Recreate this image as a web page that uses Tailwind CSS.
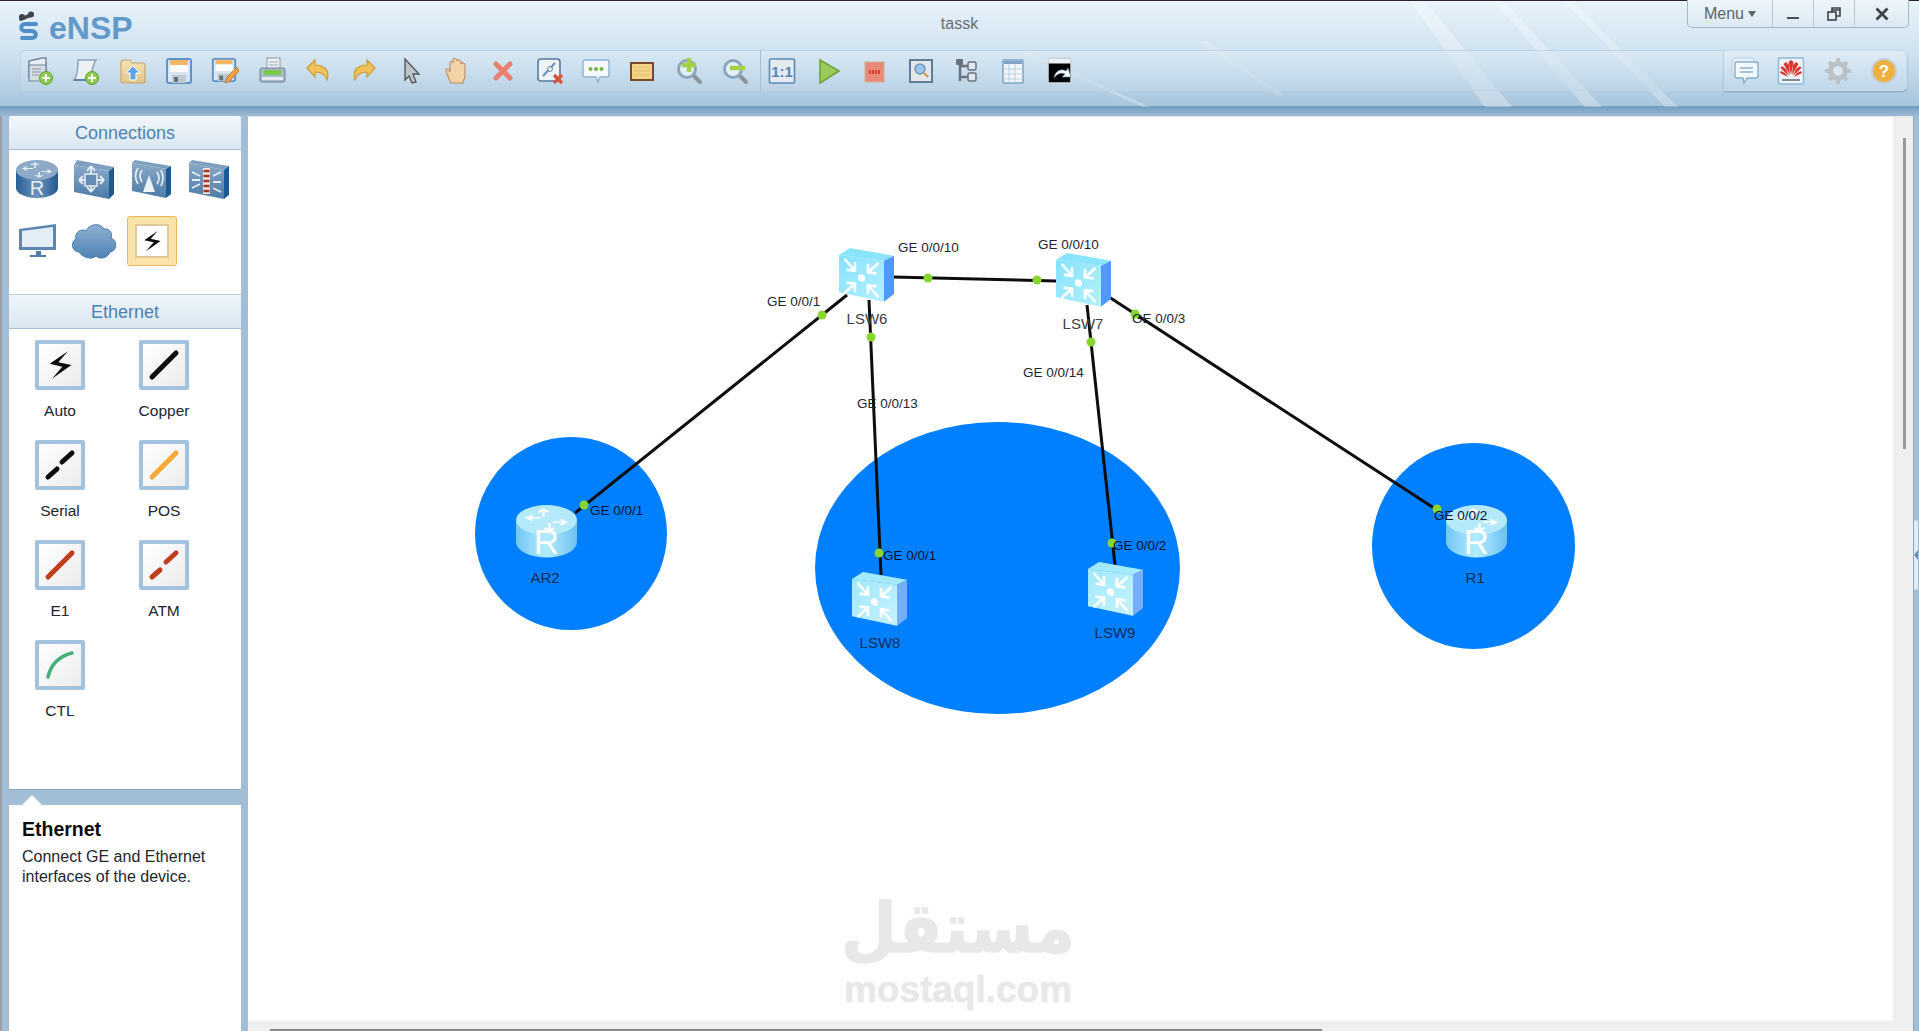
<!DOCTYPE html>
<html lang="en">

<head>
    <meta charset="UTF-8" />
    <title>eNSP - tassk</title>
    <script src="https://cdn.jsdelivr.net/npm/@tailwindcss/browser@4"></script>
</head>

<body class="font-['Liberation_Sans',Arial,sans-serif] overflow-hidden">
    <!-- shared shapes -->
    <svg width="0" height="0" class="absolute">
        <defs>
            <linearGradient id="swFront" x1="0" y1="0" x2="1" y2="1">
                <stop offset="0" stop-color="#86e2fd" />
                <stop offset="1" stop-color="#b5f0ff" />
            </linearGradient>
            <linearGradient id="rtBody" x1="0" y1="0" x2="1" y2="0">
                <stop offset="0" stop-color="#72c6f4" />
                <stop offset=".5" stop-color="#b4ecff" />
                <stop offset="1" stop-color="#6cc0f2" />
            </linearGradient>
            <linearGradient id="blueBody" x1="0" y1="0" x2="1" y2="0">
                <stop offset="0" stop-color="#275f95" />
                <stop offset=".5" stop-color="#6c94bb" />
                <stop offset="1" stop-color="#215a90" />
            </linearGradient>
            <linearGradient id="blueFront" x1="0" y1="0" x2="0" y2="1">
                <stop offset="0" stop-color="#8aa9c8" />
                <stop offset="1" stop-color="#4c7ba8" />
            </linearGradient>
            <linearGradient id="cloudFill" x1="0" y1="0" x2="0" y2="1">
                <stop offset="0" stop-color="#8db0d2" />
                <stop offset="1" stop-color="#4f83b4" />
            </linearGradient>
            <linearGradient id="tan" x1="0" y1="0" x2="0" y2="1">
                <stop offset="0" stop-color="#f4e2b4" />
                <stop offset="1" stop-color="#e2c688" />
            </linearGradient>
            <symbol id="inArrow" viewBox="0 0 14 14">
                <path d="M1 1 L11 11 M11.5 3 V11.5 H3" fill="none" stroke="#fff" stroke-width="2.6" />
            </symbol>
            <symbol id="sw" viewBox="0 0 55 54" overflow="visible">
                <path d="M0 7 L11 0 L55 7.7 L45 12.7Z" fill="#8ae4fc" />
                <path d="M45 12.7 L55 7.7 V46 L45 53.7Z" fill="#4f98fc" />
                <path d="M0 7 L45 12.7 V53.7 L0 44.3Z" fill="url(#swFront)" />
                <g transform="translate(22.5 30) skewY(7)">
                    <circle r="3.6" fill="#fff" />
                    <use href="#inArrow" x="-18" y="-18" width="14" height="14" />
                    <use href="#inArrow" x="-18" y="-18" width="14" height="14" transform="rotate(90)" />
                    <use href="#inArrow" x="-18" y="-18" width="14" height="14" transform="rotate(180)" />
                    <use href="#inArrow" x="-18" y="-18" width="14" height="14" transform="rotate(270)" />
                </g>
            </symbol>
            <symbol id="rt" viewBox="0 0 61 53">
                <path d="M0 16 V37 A30.5 15.5 0 0 0 61 37 V16Z" fill="url(#rtBody)" />
                <ellipse cx="30.5" cy="15" rx="30.5" ry="15" fill="#b3e9fb" />
                <g transform="translate(30.5 15) scale(1 .55)" stroke="#fff" stroke-width="2.6" fill="none">
                    <path d="M-20 -4 H-6 M-14 -9 L-20 -4 L-14 1" />
                    <path d="M20 4 H6 M14 9 L20 4 L14 -1" />
                    <path d="M-3 -20 V-6 M-8 -14 L-3 -20 L2 -14" />
                    <path d="M3 20 V6 M8 14 L3 20 L-2 14" />
                </g>
                <text x="30.5" y="49" text-anchor="middle" font-size="35" fill="#fff" font-family="Liberation Sans">R</text>
            </symbol>
            <symbol id="plusBadge" viewBox="0 0 14 14">
                <circle cx="7" cy="7" r="6.5" fill="#8ccb4e" stroke="#5f9f2c" />
                <path d="M7 3 V11 M3 7 H11" stroke="#fff" stroke-width="2" />
            </symbol>
            <symbol id="floppy" viewBox="0 0 28 28">
                <rect x="2" y="2" width="24" height="24" rx="2" fill="#d8e6f2" stroke="#5d93c8" stroke-width="2" />
                <rect x="5" y="3" width="18" height="5" fill="#f0b765" />
                <rect x="5" y="8" width="18" height="7" fill="#fff" />
                <rect x="7" y="18" width="14" height="8" fill="#bfc9d2" />
                <rect x="9" y="20" width="4" height="5" fill="#65727e" />
            </symbol>
            <symbol id="lens" viewBox="0 0 28 28">
                <path d="M17 17 L25 25" stroke="#8b949c" stroke-width="4" stroke-linecap="round" />
                <circle cx="12" cy="12" r="8.5" fill="#e4f0f9" stroke="#8aa6c0" stroke-width="3" />
            </symbol>
            <symbol id="bolt" viewBox="0 0 28 28">
                <path d="M21 2 L5 13 L16 15.500 L7 26 L24 14 L12.500 11.500Z" fill="#0c0c0c" />
            </symbol>
        </defs>
    </svg>

    <div class="flex flex-col w-[1919px] h-[1031px] bg-[#a2bdd6] overflow-hidden">
        <!-- Title bar and toolbar -->
        <header class="relative h-[106px] shrink-0 bg-gradient-to-b from-[#e8f3fa] via-[#cfe2f0] to-[#a8c5dc] border-t border-[#2c2430]">
            <svg class="absolute inset-0 pointer-events-none" width="1919" height="106" fill="#fff">
                <path d="M1410 0 L1425 0 L1512 106 L1485 106Z" opacity=".3" />
                <path d="M1494 0 L1504 0 L1602 106 L1585 106Z" opacity=".28" />
                <path d="M1564 0 L1572 0 L1678 106 L1665 106Z" opacity=".25" />
                <path d="M1020 50 L1025 50 L1150 106 L1142 106Z" opacity=".25" />
                <path d="M1200 40 L1206 40 L1285 95 L1278 95Z" opacity=".2" />
            </svg>

            <div class="relative grid grid-cols-[1fr_auto_1fr] h-[49px]">
                <div class="flex items-start pl-[18px] pt-[10px] gap-[6px]">
                    <svg width="25" height="30" viewBox="0 0 25 30">
                        <path d="M3 8 L13 4" stroke="#4a4f57" stroke-width="4" stroke-linecap="round" />
                        <circle cx="4" cy="6" r="3" fill="#3f444c" />
                        <circle cx="13" cy="3.5" r="3" fill="#3f444c" />
                        <path d="M18 13 H7 C2 13 2 20 7 20 H14 C19 20 19 27 14 27 H4" fill="none" stroke="#4f8ec7" stroke-width="4" stroke-linecap="round" />
                    </svg>
                    <span class="text-[32px] leading-[40px] font-bold text-[#6199ca] -mt-[3px]">eNSP</span>
                </div>
                <div class="pt-[8px] text-[16px] leading-[30px] text-[#6a6e72]">tassk</div>
                <div class="flex justify-end pr-[10px]">
                    <div class="flex h-[28px] -mt-px rounded-b-[5px] border border-t-0 border-[#a4b8c8] bg-gradient-to-b from-[#eef6fb] to-[#dbe9f3] text-[#5f6468]">
                        <div class="flex items-center justify-center gap-[4px] w-[84px] pt-[1px] text-[16px]">
                            Menu
                            <span class="w-0 h-0 border-x-[4px] border-x-transparent border-t-[6px] border-t-[#5f6468]"></span>
                        </div>
                        <div class="flex items-center justify-center w-[41px] border-l border-[#b6c8d6]">
                            <div class="w-[12px] h-[2px] mt-[9px] bg-[#4a4f54]"></div>
                        </div>
                        <div class="flex items-center justify-center w-[41px] border-l border-[#b6c8d6]">
                            <svg width="14" height="14" viewBox="0 0 14 14" fill="none" stroke="#3f4448" stroke-width="1.6">
                                <rect x="1" y="5" width="8" height="8" />
                                <path d="M5 5 V1 H13 V9 H9 M5 3 H13" />
                            </svg>
                        </div>
                        <div class="flex items-center justify-center w-[54px] border-l border-[#b6c8d6]">
                            <svg width="14" height="14" viewBox="0 0 14 14" stroke="#3f4448" stroke-width="2.8">
                                <path d="M1.5 1.5 L12.5 12.5 M12.5 1.5 L1.5 12.5" />
                            </svg>
                        </div>
                    </div>
                </div>
            </div>

            <div class="relative flex h-[41px] pl-[20px] pr-[12px]">
                <div class="flex flex-1 items-center gap-[18.35px] pl-[5px] rounded-l-[5px] border-y border-l border-y-[#bed3e3] border-l-[#bed3e3] bg-gradient-to-b from-[#dbeaf5]/70 to-[#c1d8e9]/50">
                    <!-- new topology -->
                    <svg class="w-[28px] h-[28px] shrink-0" viewBox="0 0 28 28">
                        <path d="M3 4 L16 1 H20 V20 H3Z" fill="#e8edf2" stroke="#6f88a3" stroke-width="1.5" />
                        <path d="M3 8 H20 V24 H3Z" fill="#d5dce3" stroke="#6f88a3" stroke-width="1.2" />
                        <path d="M6 12 H15 M6 15 H15 M6 18 H13" stroke="#8f9aa6" />
                        <use href="#plusBadge" x="13" y="14" width="14" height="14" />
                    </svg>
                    <svg class="w-[28px] h-[28px] shrink-0" viewBox="0 0 28 28">
                        <path d="M6 3 H24 C21 6 20 14 18 23 H2 C5 20 6 12 6 3Z" fill="#eef1f4" stroke="#8ba2ba" stroke-width="1.5" />
                        <path d="M2 23 H17" stroke="#5b86b1" stroke-width="2" />
                        <use href="#plusBadge" x="13" y="14" width="14" height="14" />
                    </svg>
                    <svg class="w-[28px] h-[28px] shrink-0" viewBox="0 0 28 28">
                        <path d="M2 6 Q2 3 5 3 H11 L13 6 H24 Q26 6 26 8 V24 Q26 26 24 26 H4 Q2 26 2 24Z" fill="url(#tan)" stroke="#c6a86e" stroke-width="1.2" />
                        <path d="M14 9 L21 16 H17 V23 H11 V16 H7Z" fill="#5da4e4" stroke="#fff" />
                    </svg>
                    <svg class="w-[28px] h-[28px] shrink-0" viewBox="0 0 28 28">
                        <use href="#floppy" width="28" height="28" />
                    </svg>
                    <svg class="w-[28px] h-[28px] shrink-0" viewBox="0 0 28 28">
                        <use href="#floppy" width="26" height="26" />
                        <path d="M14 26 L16 20 L26 10 L28 14 L18 25Z" fill="#eea53f" stroke="#a8652a" stroke-width=".7" />
                    </svg>
                    <svg class="w-[28px] h-[28px] shrink-0" viewBox="0 0 28 28">
                        <rect x="9" y="1" width="13" height="13" fill="#f0f2f4" stroke="#8f9aa5" />
                        <path d="M11 5 H20 M11 8 H20" stroke="#9aa5b0" />
                        <rect x="2" y="11" width="25" height="14" rx="2" fill="#a8b9c9" stroke="#6d8296" />
                        <rect x="6" y="13" width="17" height="5" fill="#79c84a" />
                        <rect x="4" y="20" width="21" height="3" fill="#e4e9ee" />
                    </svg>
                    <svg class="w-[28px] h-[28px] shrink-0" viewBox="0 0 28 28">
                        <path d="M3 11 L11 3 V8 C20 8 26 13 23 23 C21 17 17 15 11 15 V20Z" fill="#f0c35a" stroke="#cf9a35" stroke-width="1.2" />
                    </svg>
                    <svg class="w-[28px] h-[28px] shrink-0" viewBox="0 0 28 28">
                        <path d="M25 11 L17 3 V8 C8 8 2 13 5 23 C7 17 11 15 17 15 V20Z" fill="#f0c35a" stroke="#cf9a35" stroke-width="1.2" />
                    </svg>
                    <svg class="w-[28px] h-[28px] shrink-0" viewBox="0 0 28 28">
                        <path d="M8 2 L22 17 H16 L19 25 L15 26 L12 19 L8 23Z" fill="#bfc4c9" stroke="#55595e" stroke-width="1.4" />
                    </svg>
                    <svg class="w-[28px] h-[28px] shrink-0" viewBox="0 0 28 28">
                        <path d="M8 26 C6 21 3 17 3 13 C4 11 6 12 7 15 V6 C7 4 10 4 10 6 V3 C10 1 13 1 14 3 V4 C15 2 18 3 18 5 V7 C19 5 22 6 22 8 V18 C22 22 20 24 20 26Z" fill="#f3d3a8" stroke="#b98f5e" stroke-width="1.1" />
                    </svg>
                    <svg class="w-[28px] h-[28px] shrink-0" viewBox="0 0 28 28">
                        <path d="M7 7 L21 21 M21 7 L7 21" stroke="#e8806f" stroke-width="5" stroke-linecap="round" />
                    </svg>
                    <svg class="w-[28px] h-[28px] shrink-0" viewBox="0 0 28 28">
                        <rect x="2" y="2" width="22" height="22" rx="3" fill="#eef3f8" stroke="#55799e" stroke-width="1.6" />
                        <path d="M7 19 L19 6" stroke="#6c8fb3" stroke-width="2" />
                        <circle cx="14" cy="12" r="2.4" fill="#fff" stroke="#55799e" />
                        <path d="M18 18 L26 26 M26 18 L18 26" stroke="#d9533f" stroke-width="3.2" />
                    </svg>
                    <svg class="w-[28px] h-[28px] shrink-0" viewBox="0 0 28 28">
                        <path d="M3 3 H25 Q27 3 27 5 V18 Q27 20 25 20 H18 L16 25 L14 20 H3 Q1 20 1 18 V5 Q1 3 3 3Z" fill="#f2f8fd" stroke="#8cb3d3" stroke-width="1.4" />
                        <circle cx="8.5" cy="12" r="2" fill="#77b53c" />
                        <circle cx="14" cy="12" r="2" fill="#77b53c" />
                        <circle cx="19.500" cy="12" r="2" fill="#77b53c" />
                    </svg>
                    <svg class="w-[28px] h-[28px] shrink-0" viewBox="0 0 28 28">
                        <rect x="3" y="6" width="22" height="17" fill="#f2d488" stroke="#7a4a28" stroke-width="2" />
                        <path d="M6 10 H22 M6 14 H22 M6 18 H22" stroke="#e6bc68" stroke-width="1.2" />
                    </svg>
                    <svg class="w-[28px] h-[28px] shrink-0" viewBox="0 0 28 28">
                        <use href="#lens" width="28" height="28" />
                        <path d="M14 1 V15 M7 8 H21" stroke="#a4d246" stroke-width="4.5" />
                    </svg>
                    <svg class="w-[28px] h-[28px] shrink-0" viewBox="0 0 28 28">
                        <use href="#lens" width="28" height="28" />
                        <path d="M9 11 H24" stroke="#a4d246" stroke-width="4.5" />
                    </svg>
                    <div class="relative w-[28px] h-[28px] shrink-0">
                        <div class="absolute -left-[8px] -top-[7px] w-px h-[41px] bg-[#a9bfd0]"></div>
                        <svg class="w-[28px] h-[28px]" viewBox="0 0 28 28">
                            <rect x="1.500" y="2" width="25" height="24" rx="1.500" fill="#e4eaf0" stroke="#5b8ab7" stroke-width="1.6" />
                            <text x="14" y="20" text-anchor="middle" font-size="15" font-weight="700" fill="#4f86bc" font-family="Liberation Sans">1:1</text>
                        </svg>
                    </div>
                    <svg class="w-[28px] h-[28px] shrink-0" viewBox="0 0 28 28">
                        <path d="M6 3 L25 14 L6 26Z" fill="#9acb5c" stroke="#6ea338" stroke-width="1.6" />
                    </svg>
                    <svg class="w-[28px] h-[28px] shrink-0" viewBox="0 0 28 28">
                        <rect x="5" y="5" width="19" height="20" fill="#e98a78" stroke="#d5ad9a" />
                        <path d="M9 15 H20" stroke="#d9402f" stroke-width="4" stroke-dasharray="2 1" />
                    </svg>
                    <svg class="w-[28px] h-[28px] shrink-0" viewBox="0 0 28 28">
                        <rect x="3" y="3" width="22" height="22" fill="#e4e7ea" stroke="#5f7c98" stroke-width="2" />
                        <circle cx="13" cy="12" r="5" fill="#9cc6ec" stroke="#6f95b8" stroke-width="1.4" />
                        <path d="M17 16 L21 20" stroke="#c89a3c" stroke-width="2" />
                    </svg>
                    <svg class="w-[28px] h-[28px] shrink-0" viewBox="0 0 28 28">
                        <path d="M7 4 V24 M7 9 H15 M7 20 H15" stroke="#69727b" stroke-width="2.5" fill="none" />
                        <rect x="3" y="2" width="7" height="6" rx="1" fill="#69727b" />
                        <rect x="15" y="5" width="8" height="8" rx="1.500" fill="#dfe8f0" stroke="#69727b" stroke-width="1.5" />
                        <rect x="15" y="16" width="8" height="8" rx="1.500" fill="#dfe8f0" stroke="#69727b" stroke-width="1.5" />
                    </svg>
                    <svg class="w-[28px] h-[28px] shrink-0" viewBox="0 0 28 28">
                        <rect x="4" y="3" width="20" height="23" rx="1" fill="#f4f7fa" stroke="#7ea3c6" stroke-width="1.5" />
                        <rect x="5" y="4" width="18" height="3" fill="#7ea3c6" />
                        <path d="M4 12 H24 M4 17 H24 M4 22 H24 M10 7 V26 M16 7 V26" stroke="#b9cfe2" />
                    </svg>
                    <svg class="w-[28px] h-[28px] shrink-0" viewBox="0 0 28 28">
                        <rect x="2" y="1" width="23" height="25" rx="1" fill="#050505" stroke="#cfdbe6" stroke-width="1.5" />
                        <rect x="2.500" y="1.500" width="22" height="5" fill="#eef2f5" />
                        <path d="M8 21 C9 14 15 11 20 14 L22 11 L25 20 L16 20 L19 17 C15 15 11 17 8 21Z" fill="#fff" stroke="#3f78ad" stroke-width=".6" />
                    </svg>
                </div>
                <div class="flex items-center gap-[18.4px] w-[183px] pl-[7px] rounded-r-[6px] border-y border-r border-[#c9dcea] bg-gradient-to-b from-[#dfedf7] to-[#bfd7e9] shadow-[0_1px_2px_#7f9fb8]">
                    <svg class="w-[28px] h-[28px] shrink-0" viewBox="0 0 28 28">
                        <rect x="1" y="1" width="22" height="18" rx="2" fill="#e2edf6" stroke="#b9d0e3" />
                        <path d="M6 5 H25 Q27 5 27 7 V19 Q27 21 25 21 H16 L13 26 L12 21 H6 Q4 21 4 19 V7 Q4 5 6 5Z" fill="#f2f8fd" stroke="#89aecd" stroke-width="1.4" />
                        <path d="M9 11 H22 M9 15 H22" stroke="#8fb1cd" stroke-width="1.4" />
                    </svg>
                    <svg class="w-[28px] h-[28px] shrink-0" viewBox="0 0 28 28">
                        <rect x="1.500" y="1" width="25" height="26" rx="1" fill="#eef3f7" stroke="#8fb7d8" stroke-width="1.4" />
                        <g fill="#d8382c">
                            <path d="M14 18 L11.500 5 L14 3 L16.500 5Z" />
                            <path d="M13 18 L6.500 7 L9 5 L12 8Z" />
                            <path d="M15 18 L21.500 7 L19 5 L16 8Z" />
                            <path d="M12 19 L3.500 11 L5 9 L9 12Z" />
                            <path d="M16 19 L24.500 11 L23 9 L19 12Z" />
                            <path d="M11 20 L3 16 L4 14 L8 16Z" />
                            <path d="M17 20 L25 16 L24 14 L20 16Z" />
                        </g>
                        <path d="M5 23 H23" stroke="#66717c" stroke-width="1.600" />
                    </svg>
                    <svg class="w-[28px] h-[28px] shrink-0" viewBox="0 0 28 28">
                        <circle cx="14" cy="14" r="7.5" fill="none" stroke="#bcc1c6" stroke-width="5" />
                        <path d="M14 1 V6 M14 22 V27 M1 14 H6 M22 14 H27 M5 5 L8.500 8.500 M19.500 19.500 L23 23 M23 5 L19.500 8.500 M8.500 19.500 L5 23" stroke="#bcc1c6" stroke-width="4" />
                        <circle cx="14" cy="14" r="4" fill="#dbe7f1" />
                    </svg>
                    <svg class="w-[28px] h-[28px] shrink-0" viewBox="0 0 28 28">
                        <circle cx="14" cy="14" r="12" fill="#eeb040" stroke="#c5cfd8" stroke-width="2" />
                        <text x="14" y="20" text-anchor="middle" font-size="17" font-weight="700" fill="#fff" font-family="Liberation Sans">?</text>
                    </svg>
                </div>
            </div>
        </header>

        <div class="h-[10px] shrink-0 bg-gradient-to-b from-[#6f9cbf] to-[#9fbbd3]"></div>

        <div class="flex flex-1 min-h-0">
            <!-- Left column -->
            <aside class="flex flex-col w-[248px] shrink-0 pl-[7px] pr-[7px] border-l-2 border-[#9b9fa3]">
                <div class="flex flex-col h-[674px] bg-white rounded-t-[3px] border-b border-[#8ea6ba]">
                    <div class="flex items-center justify-center h-[34px] pt-[2px] rounded-t-[3px] bg-gradient-to-b from-[#f2f7fb] to-[#dae7f1] border-b border-[#a6c0d6] text-[18px] text-[#4d81b5]">Connections</div>
                    <div class="h-[144px] -ml-[1px] pt-[4px] grid grid-cols-[repeat(4,57.5px)] auto-rows-[50px] gap-y-[12px]">
                        <div class="flex items-center justify-center">
                            <svg class="overflow-visible" width="44" height="39" viewBox="0 0 44 39">
                                <path d="M1 10 V28 A21 10 0 0 0 43 28 V10Z" fill="url(#blueBody)" />
                                <ellipse cx="22" cy="10" rx="21" ry="10" fill="#8ea9c6" />
                                <g transform="translate(22 10) scale(1 .5)" stroke="#e6eef5" stroke-width="1.800" fill="none">
                                    <path d="M-14 -3 H-4 M-10 -7 L-14 -3 L-10 1 M14 3 H4 M10 7 L14 3 L10 -1 M-2 -14 V-4 M-6 -10 L-2 -14 L2 -10 M2 14 V4 M6 10 L2 14 L-2 10" />
                                </g>
                                <text x="22" y="35" text-anchor="middle" font-size="20" fill="#e8eff5" font-family="Liberation Sans">R</text>
                            </svg>
                        </div>
                        <div class="flex items-center justify-center">
                            <svg width="40" height="39" viewBox="0 0 40 39">
                                <path d="M0 5 L3 0 L40 7 L35 11Z" fill="#7f9fc0" />
                                <path d="M35 11 L40 7 V34 L35 39Z" fill="#1c5a92" />
                                <path d="M0 5 L35 11 V39 L0 32Z" fill="url(#blueFront)" />
                                <path d="M17 6 V32 M5 20 H30 M17 6 L13 11 M17 6 L21 11 M17 32 L13 27 M17 32 L21 27 M5 20 L9 16 M5 20 L9 24 M30 20 L26 16 M30 20 L26 24" stroke="#e6eef5" stroke-width="1.800" fill="none" />
                                <rect x="11" y="14" width="12" height="12" fill="#658db3" stroke="#e6eef5" stroke-width="1.500" />
                            </svg>
                        </div>
                        <div class="flex items-center justify-center">
                            <svg width="39" height="38" viewBox="0 0 39 38">
                                <path d="M0 3 L3 0 L39 6 L34 9Z" fill="#7f9fc0" />
                                <path d="M34 9 L39 6 V34 L34 38Z" fill="#1c5a92" />
                                <path d="M0 3 L34 9 V38 L0 31Z" fill="url(#blueFront)" />
                                <path d="M17 15 L11 32 H23Z" fill="#eef3f8" />
                                <path d="M10 10 Q6 16 10 22 M25 12 Q29 18 25 24 M6 8 Q1 16 6 24 M29 10 Q33 18 29 26" stroke="#e6eef5" stroke-width="1.700" fill="none" />
                            </svg>
                        </div>
                        <div class="flex items-center justify-center">
                            <svg width="40" height="39" viewBox="0 0 40 39">
                                <path d="M0 3 L3 0 L40 6 L35 10Z" fill="#7f9fc0" />
                                <path d="M35 10 L40 6 V35 L35 39Z" fill="#1c5a92" />
                                <path d="M0 3 L35 10 V39 L0 32Z" fill="url(#blueFront)" />
                                <rect x="14" y="8" width="7" height="26" fill="#efe6df" />
                                <path d="M14.500 11 H20.500 M14.500 16 H20.500 M14.500 21 H20.500 M14.500 26 H20.500 M14.500 31 H20.500" stroke="#a8382a" stroke-width="2.400" />
                                <path d="M3 12 L11 16 M3 20 H11 M3 28 L11 24 M24 16 L32 12 M24 22 H32 M24 28 L32 32" stroke="#e6eef5" stroke-width="1.800" />
                            </svg>
                        </div>
                        <div class="flex items-center justify-center pl-[2px]">
                            <svg width="37" height="34" viewBox="0 0 37 34">
                                <path d="M0 5 L37 0 V26 L0 26Z" fill="#5c87b3" />
                                <path d="M3 7 L34 3 V23 H3Z" fill="#e4eef7" />
                                <path d="M17 27 H22 V31 H27 V33 H11 V31 H17Z" fill="#4f7ca9" />
                            </svg>
                        </div>
                        <div class="flex items-center justify-center">
                            <svg width="46" height="38" viewBox="0 0 46 38">
                                <path d="M8 30 C1 30 -1 20 5 17 C3 10 11 6 15 9 C18 2 29 0 33 7 C39 6 42 12 40 16 C47 19 46 29 39 30 C37 36 29 38 25 34 C21 38 12 36 8 30Z" fill="url(#cloudFill)" stroke="#4a7eae" />
                            </svg>
                        </div>
                        <div class="flex items-center justify-center">
                            <div class="flex items-center justify-center w-[50px] h-[50px] rounded-[3px] border border-[#e8b95a] bg-[#fae3a8]">
                                <div class="flex items-center justify-center w-[34px] h-[34px] border-[2px] border-[#dfc998] bg-white">
                                    <svg width="24" height="24"><use href="#bolt" width="24" height="24" /></svg>
                                </div>
                            </div>
                        </div>
                    </div>
                    <div class="flex items-center justify-center h-[35px] pt-[2px] bg-gradient-to-b from-[#eef5fa] to-[#dae7f1] border-y border-t-[#c2ccd4] border-b-[#a6c0d6] text-[18px] text-[#4d81b5]">Ethernet</div>
                    <div class="-ml-[1px] grid grid-cols-[104px_104px] auto-rows-[100px] pt-[11px] text-[15.5px] leading-[20px] text-[#20242c]">
                        <div class="flex flex-col items-center gap-[11px]">
                            <div class="flex items-center justify-center w-[50px] h-[50px] rounded-[2px] border-[4px] border-[#a3c2de] bg-gradient-to-br from-white to-[#ececec]">
                                <svg width="32" height="32"><use href="#bolt" width="32" height="32" /></svg>
                            </div>
                            Auto
                        </div>
                        <div class="flex flex-col items-center gap-[11px]">
                            <div class="flex items-center justify-center w-[50px] h-[50px] rounded-[2px] border-[4px] border-[#a3c2de] bg-gradient-to-br from-white to-[#ececec]">
                                <svg width="36" height="36" viewBox="0 0 36 36"><path d="M6 30 L30 6" stroke="#0c0c0c" stroke-width="5" stroke-linecap="round" /></svg>
                            </div>
                            Copper
                        </div>
                        <div class="flex flex-col items-center gap-[11px]">
                            <div class="flex items-center justify-center w-[50px] h-[50px] rounded-[2px] border-[4px] border-[#a3c2de] bg-gradient-to-br from-white to-[#ececec]">
                                <svg width="36" height="36" viewBox="0 0 36 36"><path d="M6 30 L15 22 M20 15 L30 6" stroke="#0c0c0c" stroke-width="5" stroke-linecap="round" /></svg>
                            </div>
                            Serial
                        </div>
                        <div class="flex flex-col items-center gap-[11px]">
                            <div class="flex items-center justify-center w-[50px] h-[50px] rounded-[2px] border-[4px] border-[#a3c2de] bg-gradient-to-br from-white to-[#ececec]">
                                <svg width="36" height="36" viewBox="0 0 36 36"><path d="M6 30 L30 6" stroke="#f2a93a" stroke-width="5" stroke-linecap="round" /></svg>
                            </div>
                            POS
                        </div>
                        <div class="flex flex-col items-center gap-[11px]">
                            <div class="flex items-center justify-center w-[50px] h-[50px] rounded-[2px] border-[4px] border-[#a3c2de] bg-gradient-to-br from-white to-[#ececec]">
                                <svg width="36" height="36" viewBox="0 0 36 36"><path d="M6 30 L30 6" stroke="#bd3f1d" stroke-width="5" stroke-linecap="round" /></svg>
                            </div>
                            E1
                        </div>
                        <div class="flex flex-col items-center gap-[11px]">
                            <div class="flex items-center justify-center w-[50px] h-[50px] rounded-[2px] border-[4px] border-[#a3c2de] bg-gradient-to-br from-white to-[#ececec]">
                                <svg width="36" height="36" viewBox="0 0 36 36"><path d="M6 30 L14 23 M20 15 L30 6" stroke="#bd3f1d" stroke-width="5" stroke-linecap="round" /></svg>
                            </div>
                            ATM
                        </div>
                        <div class="flex flex-col items-center gap-[11px]">
                            <div class="flex items-center justify-center w-[50px] h-[50px] rounded-[2px] border-[4px] border-[#a3c2de] bg-gradient-to-br from-white to-[#ececec]">
                                <svg width="36" height="36" viewBox="0 0 36 36"><path d="M6 30 C9 17 18 9 30 6" fill="none" stroke="#45b07a" stroke-width="3.500" stroke-linecap="round" /></svg>
                            </div>
                            CTL
                        </div>
                    </div>
                </div>

                <div class="relative flex-1 mt-[15px] bg-white px-[13px] pt-[11px] text-[#22262e]">
                    <div class="absolute left-[13px] -top-[10px] w-0 h-0 border-x-[10px] border-x-transparent border-b-[10px] border-b-white"></div>
                    <h2 class="text-[19.5px] leading-[26px] font-bold text-[#0c0c0c]">Ethernet</h2>
                    <p class="mt-[5px] text-[16px] leading-[20px]">Connect GE and Ethernet<br />interfaces of the device.</p>
                </div>
            </aside>

            <!-- Topology canvas -->
            <main class="flex flex-col flex-1 min-w-0">
                <div class="flex flex-1 min-h-0 border-t border-[#dfe5ea]">
                    <svg class="flex-1 bg-white" width="1645" height="904" viewBox="248 117 1645 904" font-family="Liberation Sans">
                        <ellipse cx="571" cy="533.500" rx="96" ry="96.500" fill="#0080ff" />
                        <ellipse cx="997.500" cy="568" rx="182.500" ry="146" fill="#0080ff" />
                        <ellipse cx="1473.500" cy="546" rx="101.500" ry="103" fill="#0080ff" />

                        <g stroke="#0d0d0d" stroke-width="3" fill="none">
                            <path d="M847 295 L575 513" />
                            <path d="M893 277 L1056 281" />
                            <path d="M869 300 L881 575" />
                            <path d="M1087 305 L1115 565" />
                            <path d="M1109 297 L1437 510" />
                        </g>

                        <g fill="#87d52f">
                            <circle cx="822" cy="315" r="4.500" />
                            <circle cx="928" cy="278" r="4.500" />
                            <circle cx="1037" cy="280" r="4.500" />
                            <circle cx="871" cy="337" r="4.500" />
                            <circle cx="1091" cy="342" r="4.500" />
                            <circle cx="1135" cy="314" r="4.500" />
                            <circle cx="584" cy="505" r="4.500" />
                            <circle cx="879" cy="553" r="4.500" />
                            <circle cx="1112" cy="543" r="4.500" />
                            <circle cx="1437" cy="509" r="4.500" />
                        </g>

                        <use href="#sw" x="839" y="248" width="55" height="54" />
                        <use href="#sw" x="1056" y="253" width="55" height="54" />
                        <use href="#sw" x="852" y="572" width="55" height="54" />
                        <path d="M852 579 L863 572 L907 580 V618 L897 626 L852 616Z" fill="#fff" opacity=".22" />
                        <use href="#sw" x="1088" y="562" width="55" height="54" />
                        <path d="M1088 569 L1099 562 L1143 570 V608 L1133 616 L1088 606Z" fill="#fff" opacity=".22" />
                        <use href="#rt" x="516" y="505" width="61" height="53" />
                        <use href="#rt" x="1446" y="505" width="61" height="53" />

                        <g font-size="13.500" fill="#1d2430">
                            <text x="767" y="306">GE 0/0/1</text>
                            <text x="898" y="252">GE 0/0/10</text>
                            <text x="1038" y="249">GE 0/0/10</text>
                            <text x="857" y="408">GE 0/0/13</text>
                            <text x="1023" y="377">GE 0/0/14</text>
                            <text x="1132" y="323">GE 0/0/3</text>
                        </g>
                        <g font-size="13.500" fill="#08122c">
                            <text x="590" y="515">GE 0/0/1</text>
                            <text x="883" y="560">GE 0/0/1</text>
                            <text x="1113" y="550">GE 0/0/2</text>
                            <text x="1434" y="520">GE 0/0/2</text>
                        </g>
                        <g font-size="15" text-anchor="middle" fill="#3c4048">
                            <text x="867" y="324">LSW6</text>
                            <text x="1083" y="329">LSW7</text>
                        </g>
                        <g font-size="15" text-anchor="middle" fill="#0c2f5c">
                            <text x="880" y="648">LSW8</text>
                            <text x="1115" y="638">LSW9</text>
                            <text x="545" y="583">AR2</text>
                            <text x="1475" y="583">R1</text>
                        </g>

                        <!-- watermark -->
                        <g text-anchor="middle" fill="#e8e8e8">
                            <text transform="translate(958 952) scale(.925 1)" font-size="69" font-weight="700" font-family="DejaVu Sans" direction="rtl" stroke="#e8e8e8" stroke-width="1.500">مستقل</text>
                            <text x="958" y="1002" font-size="37" font-weight="700" stroke="#e8e8e8" stroke-width=".6">mostaql.com</text>
                        </g>
                    </svg>
                    <div class="relative w-[20px] shrink-0 bg-[#efefef]">
                        <div class="absolute left-[10px] top-[21px] w-[3px] h-[311px] bg-[#999]"></div>
                    </div>
                </div>
                <div class="relative h-[10px] shrink-0 bg-[#efefef]">
                    <div class="absolute left-[22px] top-[8px] w-[1052px] h-[2px] bg-[#888]"></div>
                </div>
            </main>

            <!-- Right edge with the splitter handle -->
            <div class="relative w-[6px] shrink-0 border-l border-[#8fa6ba]">
                <div class="absolute left-0 top-[404px] w-[4px] h-[70px] rounded-[2px] bg-[#dfeaf3]"></div>
                <div class="absolute left-0 top-[434px] w-0 h-0 border-y-[5px] border-y-transparent border-r-[4px] border-r-[#5f8fb8]"></div>
            </div>
        </div>
    </div>
</body>

</html>
